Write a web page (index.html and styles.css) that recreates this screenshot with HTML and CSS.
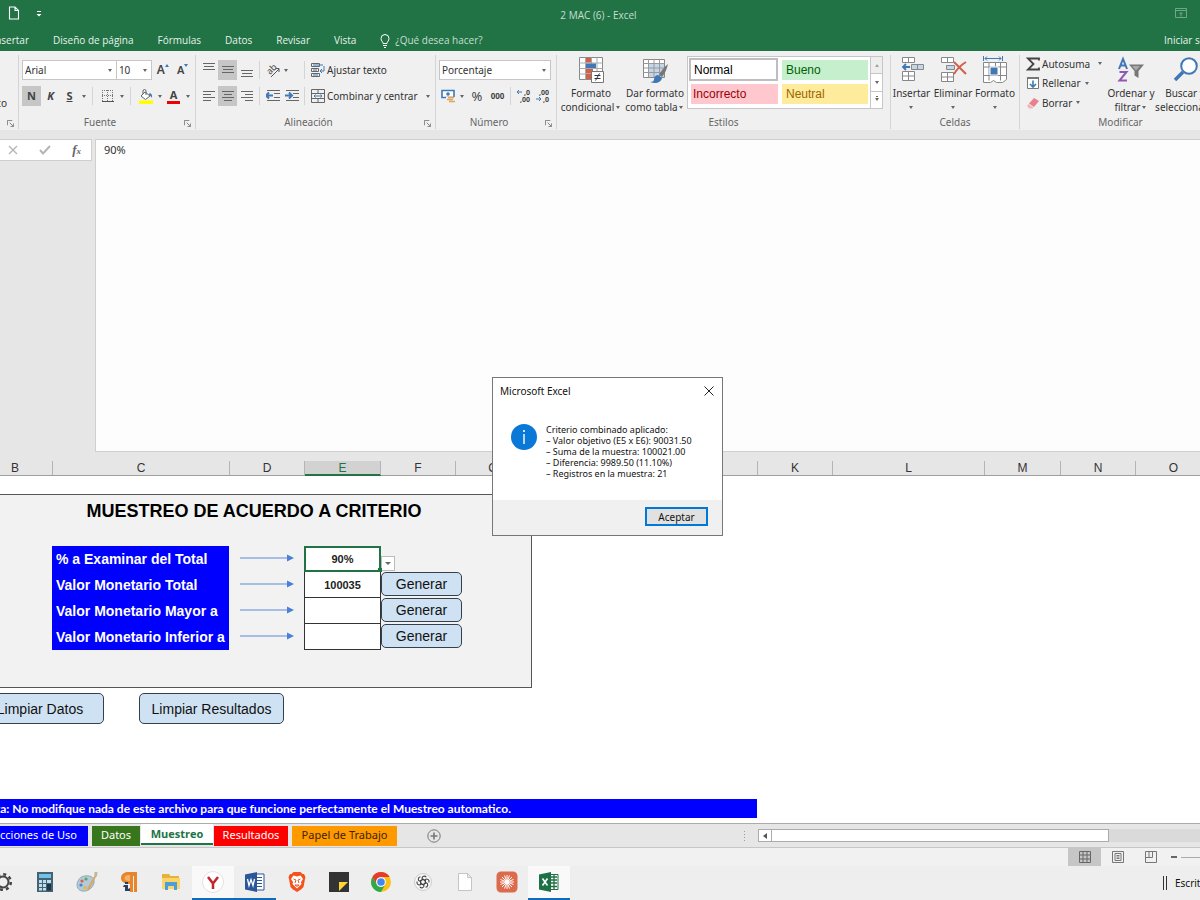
FILE: index.html
```
<!DOCTYPE html>
<html lang="es">
<head>
    <meta charset="UTF-8">
    <meta name="viewport" content="width=device-width, initial-scale=1.0">
    <title>2 MAC (6) - Excel</title>
    <link rel="stylesheet" href="styles.css">
</head>
<body>
    <!-- Title bar -->
    <header class="titlebar">
        <button class="quick" aria-label="Nuevo">
            <svg width="12" height="14" viewBox="0 0 12 14" fill="none" stroke="#fff" stroke-width="1.1"><path d="M1.5 1h5.5l3.5 3.5V13h-9zM7 1v3.5h3.5"/></svg>
        </button>
        <button class="quick" aria-label="Personalizar barra">
            <svg width="8" height="8" viewBox="0 0 8 8"><path d="M2 2h4v1H2zM1.5 5h5L4 7.5z" fill="#fff"/></svg>
        </button>
        <span class="doc-title">2 MAC (6) - Excel</span>
        <button class="quick ribbon-opts" aria-label="Opciones de cinta">
            <svg width="12" height="10" viewBox="0 0 12 10" fill="none" stroke="#6fa888"><path d="M.5.5h11v9H.5zM.5 2.5h11M6 8.5v-4M4.5 6L6 4.5 7.5 6"/></svg>
        </button>
    </header>

    <!-- Ribbon tabs -->
    <nav class="tabs">
        <a href="#" class="tab-cut"><span>Insertar</span></a>
        <a href="#">Diseño de página</a>
        <a href="#">Fórmulas</a>
        <a href="#">Datos</a>
        <a href="#">Revisar</a>
        <a href="#">Vista</a>
        <a href="#" class="tell-me">
            <svg width="10" height="14" viewBox="0 0 10 14" fill="none" stroke="#fff"><path d="M3 9.500C3 7.5 1 7 1 4.500a4 4 0 0 1 8 0C9 7 7 7.5 7 9.500zM3 11.5h4M4 13.5h2"/></svg>
            ¿Qué desea hacer?
        </a>
        <a href="#" class="login">Iniciar sesión</a>
    </nav>

    <!-- Ribbon -->
    <section class="ribbon">
        <div class="group">
            <div class="cut-text"><span>Copiar formato</span></div>
            <div class="group-name"><svg class="launch" viewBox="0 0 8 8"><path d="M.5 6V.5H6M3 3l4 4M7.5 4v3.500H4"/></svg></div>
        </div>

        <div class="group">
            <div class="rows font-rows">
                <div class="row">
                    <div class="combo font-name"><select aria-label="Fuente"><option>Arial</option></select></div>
                    <div class="combo font-size"><select aria-label="Tamaño"><option>10</option></select></div>
                    <button class="tool grow" aria-label="Aumentar fuente"><b class="big-a">A</b><i class="up"></i></button>
                    <button class="tool grow" aria-label="Disminuir fuente"><b>A</b><i class="down"></i></button>
                </div>
                <div class="row">
                    <button class="tool on"><b>N</b></button>
                    <button class="tool"><b><em>K</em></b></button>
                    <button class="tool"><b><u>S</u></b></button>
                    <i class="caret"></i>
                    <i class="sep"></i>
                    <button class="tool" aria-label="Bordes">
                        <svg width="14" height="14" viewBox="0 0 14 14" fill="none" stroke="#777"><path d="M1.5 1v11M6.5 1v11M11.5 1v11M1 1.5h11M1 6.5h11" stroke-dasharray="1 1"/><path d="M1 12.5h12" stroke="#555"/></svg>
                    </button>
                    <i class="caret"></i>
                    <i class="sep"></i>
                    <button class="tool" aria-label="Color de relleno">
                        <svg width="16" height="16" viewBox="0 0 16 16" fill="none"><path d="M1 12.5h14V16H1z" fill="#ff0"/><path d="M7 4l5 4-4.500 3.500L3 8z" fill="#fff" stroke="#666"/><path d="M5 6V3a1.500 1.500 0 0 1 3 0v4" stroke="#666"/><path d="M11.5 5c2 .5 3 2 2.500 5-1-1.500-1.500-2.500-3-3z" fill="#3f78b5"/></svg>
                    </button>
                    <i class="caret"></i>
                    <button class="tool font-color" aria-label="Color de fuente"><b>A</b></button>
                    <i class="caret"></i>
                </div>
            </div>
            <div class="group-name with-launch">Fuente<svg class="launch" viewBox="0 0 8 8"><path d="M.5 6V.5H6M3 3l4 4M7.5 4v3.500H4"/></svg></div>
        </div>

        <div class="group">
            <div class="rows">
                <div class="row">
                    <button class="tool" aria-label="Alinear arriba"><svg class="lines" viewBox="0 0 14 16"><path d="M1 1.5h12M2 4.500h10M1 7.5h12"/></svg></button>
                    <button class="tool on" aria-label="Alinear en medio"><svg class="lines" viewBox="0 0 14 16"><path d="M1 4.500h12M2 7.5h10M1 10.5h12"/></svg></button>
                    <button class="tool" aria-label="Alinear abajo"><svg class="lines" viewBox="0 0 14 16"><path d="M1 8.500h12M2 11.5h10M1 14.5h12"/></svg></button>
                    <i class="sep"></i>
                    <button class="tool" aria-label="Orientación">
                        <svg width="16" height="16" viewBox="0 0 16 16" fill="none" stroke="#555"><text transform="translate(5 13) rotate(-45)" class="ab">ab</text><path d="M6 15l8-8M10.5 6.5H14V10"/></svg>
                    </button>
                    <i class="caret"></i>
                    <i class="sep sep-wide"></i>
                    <button class="wide">
                        <svg width="14" height="14" viewBox="0 0 14 14" fill="none" stroke="#666"><path d="M.5.5h8v3h-8zM.5 5.5h7v3h-7zM.5 10.5h8v3h-8z"/><path d="M2 2h10M2 7h4M2 12h5" stroke="#3f78b5"/><path d="M13 3v5H9M11 6L9 8l2 2" stroke="#3f78b5"/></svg>
                        Ajustar texto
                    </button>
                </div>
                <div class="row">
                    <button class="tool" aria-label="Alinear a la izquierda"><svg class="lines" viewBox="0 0 14 16"><path d="M1 3.500h12M1 6.500h8M1 9.500h12M1 12.5h8"/></svg></button>
                    <button class="tool on" aria-label="Centrar"><svg class="lines" viewBox="0 0 14 16"><path d="M1 3.500h12M3 6.500h8M1 9.500h12M3 12.5h8"/></svg></button>
                    <button class="tool" aria-label="Alinear a la derecha"><svg class="lines" viewBox="0 0 14 16"><path d="M1 3.500h12M5 6.500h8M1 9.500h12M5 12.5h8"/></svg></button>
                    <i class="sep"></i>
                    <button class="tool" aria-label="Disminuir sangría"><svg class="lines" viewBox="0 0 14 16"><path d="M1 2.500h13M8 5.500h6M8 9.500h6M1 12.5h13"/><path d="M0 7.5h7M3 4.500l-3 3 3 3" class="blue"/></svg></button>
                    <button class="tool" aria-label="Aumentar sangría"><svg class="lines" viewBox="0 0 14 16"><path d="M1 2.500h13M8 5.500h6M8 9.500h6M1 12.5h13"/><path d="M0 7.5h7M4 4.500l3 3-3 3" class="blue"/></svg></button>
                    <i class="sep"></i>
                    <button class="wide">
                        <svg width="14" height="14" viewBox="0 0 14 14" fill="none" stroke="#666"><path d="M.5.5h13v13H.5zM.5 4.500h13M.5 9.500h13M7 .5v4M7 9.500v4"/><path d="M3 7h8M4.500 5.500L3 7l1.500 1.500M9.500 5.500L11 7 9.500 8.500" stroke="#3f78b5"/></svg>
                        Combinar y centrar
                    </button>
                    <i class="caret push"></i>
                </div>
            </div>
            <div class="group-name with-launch">Alineación<svg class="launch" viewBox="0 0 8 8"><path d="M.5 6V.5H6M3 3l4 4M7.5 4v3.500H4"/></svg></div>
        </div>

        <div class="group">
            <div class="rows">
                <div class="row">
                    <div class="combo number"><select aria-label="Formato de número"><option>Porcentaje</option></select></div>
                </div>
                <div class="row">
                    <button class="tool" aria-label="Contabilidad">
                        <svg width="15" height="15" viewBox="0 0 15 15" fill="none"><path d="M1 1.500h12v7H1z" fill="#fff" stroke="#3f78b5" stroke-width="1.600"/><circle cx="7" cy="5" r="1.800" fill="#3f78b5"/><path d="M5 8h9v6H5z" fill="#f0f0f0"/><path d="M7 8.500h6M6 10.5h6M8 12.5h6" stroke="#e0a458" stroke-width="1.500"/></svg>
                    </button>
                    <i class="caret"></i>
                    <button class="tool pct">%</button>
                    <button class="tool zeros">000</button>
                    <i class="sep"></i>
                    <button class="tool" aria-label="Aumentar decimales">
                        <svg width="14" height="14" viewBox="0 0 14 14" class="dec"><text x="7" y="6">,0</text><text x="3" y="13">,00</text><path d="M0 3h5M2 1L0 3l2 2"/></svg>
                    </button>
                    <button class="tool" aria-label="Disminuir decimales">
                        <svg width="14" height="14" viewBox="0 0 14 14" class="dec"><text x="3" y="6">,00</text><text x="7" y="13">,0</text><path d="M0 10h5M3 8l2 2-2 2"/></svg>
                    </button>
                </div>
            </div>
            <div class="group-name with-launch">Número<svg class="launch" viewBox="0 0 8 8"><path d="M.5 6V.5H6M3 3l4 4M7.5 4v3.500H4"/></svg></div>
        </div>

        <div class="group">
            <div class="bigs styles">
                <button class="big">
                    <svg width="28" height="28" viewBox="0 0 28 28" fill="none"><path d="M2.500 1.500h23v22h-23z" fill="#fff" stroke="#888"/><path d="M2.500 7h23M2.500 12.5h23M2.500 18h23M8.500 1.500v22M14.5 1.500v22M20 1.500v22" stroke="#aaa"/><path d="M9 2h5v4.500H9zM9 13h7v4.500H9zM9 18h5v5H9z" fill="#d0604a"/><path d="M9 7.500h10V12H9z" fill="#3f78b5"/><path d="M14.5 15.500h12v11h-12z" fill="#fff" stroke="#777"/><path d="M17.500 19.500h6M17.500 22.500h6M22.500 17.500l-4 7" stroke="#333"/></svg>
                    <span>Formato<br>condicional<i class="caret"></i></span>
                </button>
                <button class="big">
                    <svg width="28" height="28" viewBox="0 0 28 28" fill="none"><path d="M2.500 3.500h21v18h-21z" fill="#fff" stroke="#888"/><path d="M8 8h15v13H8z" fill="#c5d6e8"/><path d="M2.500 7.500h21M2.500 12h21M2.500 16.500h21M7.500 3.500v18M13 3.500v18M18.500 3.500v18" stroke="#999"/><path d="M27 8c-4 3-7 7-9 11l3 2c3-4 5-8 6-13z" fill="#777"/><path d="M17 19c-3 0-4 3-4 5-1 2-3 2-4 2 5 2 11 1 12-4z" fill="#3f78b5"/></svg>
                    <span>Dar formato<br>como tabla<i class="caret"></i></span>
                </button>
                <div class="gallery">
                    <div class="swatches">
                        <button class="sw normal">Normal</button>
                        <button class="sw good">Bueno</button>
                        <button class="sw bad">Incorrecto</button>
                        <button class="sw neutral">Neutral</button>
                    </div>
                    <div class="gallery-scroll">
                        <button class="off" aria-label="Arriba"><i class="caret flip"></i></button>
                        <button aria-label="Abajo"><i class="caret"></i></button>
                        <button class="more" aria-label="Más"><i class="caret"></i></button>
                    </div>
                </div>
            </div>
            <div class="group-name">Estilos</div>
        </div>

        <div class="group">
            <div class="bigs cells">
                <button class="big">
                    <svg width="28" height="28" viewBox="0 0 28 28" fill="none" stroke="#888"><path d="M4.500 1.500h12v5h-12zM10.5 1.500v5M4.500 15.500h12v9h-12zM10.5 15.500v9M4.500 20h12" fill="#fff"/><path d="M13.500 8.500h12v5h-12zM19.500 8.500v5" fill="#c5d6e8"/><path d="M5 11h7M8 8l-3 3 3 3" stroke="#3f78b5" stroke-width="1.800"/></svg>
                    <span>Insertar<i class="caret under"></i></span>
                </button>
                <button class="big">
                    <svg width="28" height="28" viewBox="0 0 28 28" fill="none" stroke="#888"><path d="M2.500 1.500h12v5h-12zM8.500 1.500v5M2.500 16.500h12v9h-12zM8.500 16.500v9M2.500 21h12" fill="#fff"/><path d="M7.500 9.500h8v4h-8z" fill="#c5d6e8"/><path d="M15 6l12 12M27 6c-5 3-9 7-12 12" stroke="#d0604a" stroke-width="2"/></svg>
                    <span>Eliminar<i class="caret under"></i></span>
                </button>
                <button class="big">
                    <svg width="28" height="28" viewBox="0 0 28 28" fill="none" stroke="#888"><path d="M2.500 6.500h23v17l-4 3h-6l-3-2-3 2h-7z" fill="#fff"/><path d="M2.500 11h23M2.500 19.500h23M8 6.500v18M14.5 6.500v4M19.500 6.500v18"/><path d="M9 11h8v8H9z" fill="#3f78b5" stroke="#fff"/><path d="M2.500 0v5M21.500 0v5M4 2.500h16M6 .5l-2 2 2 2M18 .5l2 2-2 2" stroke="#3f78b5"/></svg>
                    <span>Formato<i class="caret under"></i></span>
                </button>
            </div>
            <div class="group-name">Celdas</div>
        </div>

        <div class="group edit">
            <div class="bigs">
                <div class="stack">
                    <button class="wide"><svg width="14" height="14" viewBox="0 0 14 14" fill="none"><path d="M13 3.500V1.500H2L7.500 7 2 12.5h11v-2" stroke="#444" stroke-width="1.800"/></svg>Autosuma<i class="caret push"></i></button>
                    <button class="wide"><svg width="14" height="14" viewBox="0 0 14 14" fill="none"><path d="M1.500 1.500h11v11h-11z" fill="#fff" stroke="#777"/><path d="M1 2h12" stroke="#777" stroke-width="2"/><path d="M7 4.500v6M4 8l3 3 3-3" stroke="#3f78b5" stroke-width="1.600"/></svg>Rellenar<i class="caret"></i></button>
                    <button class="wide"><svg width="14" height="14" viewBox="0 0 14 14"><path d="M8 2l5 3-5 6-5-3.500z" fill="#e8808e"/><path d="M2.500 8l5 3.500-1 1H3L1 10z" fill="#f3b4bd"/></svg>Borrar<i class="caret"></i></button>
                </div>
                <button class="big">
                    <svg width="28" height="28" viewBox="0 0 28 28" fill="none"><path d="M2 13L6 3l4 10M3.500 9.500h5" stroke="#3f78b5" stroke-width="2"/><path d="M2.500 16h7l-7 8.500h7.500" stroke="#9057b5" stroke-width="2"/><path d="M12 8.500h15l-5.500 6.500v7l-4-2.500V15z" fill="#777"/><path d="M15 10h8l-4 4.500z" fill="#aaa"/></svg>
                    <span>Ordenar y<br>filtrar<i class="caret"></i></span>
                </button>
                <button class="big">
                    <svg width="28" height="28" viewBox="0 0 28 28" fill="none"><circle cx="18" cy="10" r="7.800" fill="#fff" stroke="#3f78b5" stroke-width="2"/><path d="M12 16l-8 8" stroke="#3f78b5" stroke-width="3.500"/></svg>
                    <span>Buscar y<br>seleccionar<i class="caret"></i></span>
                </button>
            </div>
            <div class="group-name">Modificar</div>
        </div>
    </section>

    <!-- Formula bar -->
    <section class="formula">
        <div class="formula-buttons">
            <button aria-label="Cancelar"><svg width="10" height="10" viewBox="0 0 10 10" stroke="#b5b5b5" stroke-width="1.300"><path d="M1 1l8 8M9 1L1 9"/></svg></button>
            <button aria-label="Introducir"><svg width="12" height="10" viewBox="0 0 12 10" fill="none" stroke="#b5b5b5" stroke-width="2"><path d="M1 5l3 3.500L11 1"/></svg></button>
            <button class="fx">f<small>x</small></button>
        </div>
        <textarea class="formula-text" aria-label="Barra de fórmulas">90%</textarea>
    </section>

    <!-- Column headers -->
    <div class="col-heads">
        <span>B</span><span>C</span><span>D</span><span class="current">E</span><span>F</span><span>G</span><span>H</span><span>I</span><span>J</span><span>K</span><span>L</span><span>M</span><span>N</span><span>O</span>
    </div>

    <!-- Sheet -->
    <main class="sheet">
        <section class="panel">
            <h1>MUESTREO DE ACUERDO A CRITERIO</h1>
            <div class="criteria">
                <label for="pct">% a Examinar del Total</label>
                <svg class="arrow" viewBox="0 0 56 8"><path d="M1 4h48"/><path d="M48 .5L55 4l-7 3.500z" class="tip"/></svg>
                <div class="cell active"><input id="pct" value="90%"><i class="handle"></i></div>
                <button class="drop" aria-label="Elegir valor"><i class="caret"></i></button>

                <label for="total">Valor Monetario Total</label>
                <svg class="arrow" viewBox="0 0 56 8"><path d="M1 4h48"/><path d="M48 .5L55 4l-7 3.500z" class="tip"/></svg>
                <div class="cell"><input id="total" value="100035"></div>
                <button class="shape">Generar</button>

                <label for="mayor">Valor Monetario Mayor a</label>
                <svg class="arrow" viewBox="0 0 56 8"><path d="M1 4h48"/><path d="M48 .5L55 4l-7 3.500z" class="tip"/></svg>
                <div class="cell"><input id="mayor"></div>
                <button class="shape">Generar</button>

                <label for="inferior">Valor Monetario Inferior a</label>
                <svg class="arrow" viewBox="0 0 56 8"><path d="M1 4h48"/><path d="M48 .5L55 4l-7 3.500z" class="tip"/></svg>
                <div class="cell"><input id="inferior"></div>
                <button class="shape">Generar</button>
            </div>
        </section>
        <div class="actions">
            <button class="shape clear-data">Limpiar Datos</button>
            <button class="shape clear-results">Limpiar Resultados</button>
        </div>
        <p class="note"><span>Nota: No modifique nada de este archivo para que funcione perfectamente el Muestreo automatico.</span></p>
    </main>

    <!-- Sheet tabs and horizontal scroll -->
    <footer class="sheet-tabs">
        <a href="#" class="st use"><span>Instrucciones de Uso</span></a>
        <a href="#" class="st data">Datos</a>
        <a href="#" class="st current">Muestreo</a>
        <a href="#" class="st results">Resultados</a>
        <a href="#" class="st paper">Papel de Trabajo</a>
        <button class="add" aria-label="Hoja nueva"><svg width="14" height="14" viewBox="0 0 14 14" fill="none" stroke="#777"><circle cx="7" cy="7" r="6.200"/><path d="M7 3.500v7M3.500 7h7" stroke-width="1.600"/></svg></button>
        <svg class="dots" width="2" height="10" viewBox="0 0 2 10" fill="#999"><path d="M0 0h1v1H0zM0 3h1v1H0zM0 6h1v1H0zM0 9h1v1H0z"/></svg>
        <div class="hscroll">
            <button aria-label="Desplazar a la izquierda"><svg width="4" height="6" viewBox="0 0 4 6"><path d="M4 0v6L0 3z" fill="#555"/></svg></button>
            <div class="thumb"></div>
        </div>
    </footer>

    <div class="status">
        <button class="view on" aria-label="Normal"><svg width="12" height="12" viewBox="0 0 12 12" fill="none" stroke="#666"><path d="M.5.5h11v11H.5zM.5 4h11M.5 8h11M4 .5v11M8 .5v11"/></svg></button>
        <button class="view" aria-label="Diseño de página"><svg width="12" height="12" viewBox="0 0 12 12" fill="none" stroke="#777"><path d="M.5.5h11v11H.5zM3 2.500h6v7H3zM4.500 4.500h3M4.500 6h3M4.500 7.500h3"/></svg></button>
        <button class="view" aria-label="Salto de página"><svg width="12" height="12" viewBox="0 0 12 12" fill="none" stroke="#777"><path d="M.5.5h11v11H.5zM.5 6.500h7v-6M4 .5v6"/></svg></button>
        <i class="minus"></i>
        <i class="zoom-line"></i>
    </div>

    <!-- Taskbar -->
    <nav class="taskbar">
        <button class="app" aria-label="Configuración"><svg width="20" height="20" viewBox="0 0 20 20" fill="none" stroke="#444"><circle cx="10" cy="10" r="5.500" stroke-width="2"/><circle cx="10" cy="10" r="7.800" stroke-width="2.500" stroke-dasharray="3.060 3.060"/></svg></button>
        <button class="app" aria-label="Calculadora"><svg width="20" height="20" viewBox="0 0 20 20"><path d="M2 0h16v20H2z" fill="#47616f"/><path d="M4 2h12v4H4z" fill="#6fc3ea"/><path d="M4 8h3v3H4zM8 8h3v3H8zM12 8h4v3h-4zM4 12h3v3H4zM8 12h3v3H8zM4 16h3v2.500H4zM8 16h3v2.500H8z" fill="#b9dff0"/><path d="M12 12h4v6.500h-4z" fill="#17374a"/></svg></button>
        <button class="app" aria-label="Paint"><svg width="22" height="20" viewBox="0 0 22 20"><path d="M9 4c6-1 10 2 9 7s-7 9-12 8-6-6-4-10 4-4.500 7-5z" fill="#b4cad8" stroke="#8fa9b8"/><circle cx="6" cy="9" r="1.600" fill="#d9604c"/><circle cx="10" cy="7" r="1.600" fill="#58a85a"/><circle cx="5" cy="13" r="1.600" fill="#4a86c5"/><circle cx="9" cy="15.500" r="1.600" fill="#e5b93f"/><path d="M20 1l1.500 1L13 18l-2 1 .5-3z" fill="#d9a566"/><path d="M18.500 0h3l-1 5-2-1z" fill="#c4b49a"/></svg></button>
        <button class="app" aria-label="Editor"><svg width="18" height="20" viewBox="0 0 18 20"><path d="M17 0v20h-3V4h-1v16h-3v-8C4 12 1 9.500 1 6s3-6 7-6z" fill="#e8852c"/><path d="M10 3v6C6 9 4.500 8 4.500 6S6 3 10 3z" fill="#f6b06c"/><path d="M5 10h3v2H5zM4 13h4v4l2-1v3H5v-4H3z" fill="#24405e"/></svg></button>
        <button class="app" aria-label="Explorador"><svg width="20" height="18" viewBox="0 0 20 18"><path d="M1 1h7l1.500 2H18v4H1z" fill="#e5b23c"/><path d="M1 5h18v11H1z" fill="#fbd667"/><path d="M4 9h12v8h-3v-4H7v4H4z" fill="#4a9edb"/></svg></button>
        <button class="app open here" aria-label="Yandex"><svg width="22" height="22" viewBox="0 0 22 22"><circle cx="11" cy="11" r="10.500" fill="#fff" stroke="#e2e2e2"/><path d="M6 6l5 6.500V18M16 6l-5 6.500" fill="none" stroke="#c4242e" stroke-width="2.500"/></svg></button>
        <button class="app open" aria-label="Word"><svg width="20" height="20" viewBox="0 0 20 20"><path d="M9 2h10v16H9z" fill="#fff" stroke="#2b579a"/><path d="M12 5.500h5M12 8.500h5M12 11.5h5M12 14.5h5" stroke="#2b579a"/><path d="M0 2.500L12 0v20L0 17.500z" fill="#2b579a"/><path d="M2.500 7l1.500 6.500L6 7.500l2 6L9.500 7" fill="none" stroke="#fff" stroke-width="1.300"/></svg></button>
        <button class="app" aria-label="Brave"><svg width="18" height="20" viewBox="0 0 18 20"><path d="M5.500 0h7l2 2H16l1.500 3-.5 2-1.500 8-2.500 2.500L9 20l-4-2.500L2.500 15 1 7 .5 5 2 2h1.500z" fill="#f4511e"/><path d="M9 4.500l3.500-1L15 7l-2 3 .5 2L9 16.500 4.500 12 5 10 3 7l2.500-3.500z" fill="#fff"/><path d="M5.500 7l2.500 1-1 3M12.500 7L10 8l1 3M7 13h4l-2 1.500z" stroke="#f4511e" fill="none"/></svg></button>
        <button class="app" aria-label="Notas"><svg width="20" height="20" viewBox="0 0 20 20"><path d="M0 0h20v20H0z" fill="#333"/><path d="M10 10h9l-9 9z" fill="#fdd835"/></svg></button>
        <button class="app" aria-label="Chrome"><svg width="20" height="20" viewBox="0 0 20 20"><circle cx="10" cy="10" r="10" fill="#fbc116"/><path d="M1.340 5A10 10 0 0 1 18.660 5H10a5 5 0 0 0-4.330 7.500z" fill="#e33b2e"/><path d="M1.340 5A10 10 0 0 0 10 20l4.330-7.500A5 5 0 0 1 5.670 12.5z" fill="#2da94f"/><circle cx="10" cy="10" r="4.800" fill="#fff"/><circle cx="10" cy="10" r="3.800" fill="#4286f5"/></svg></button>
        <button class="app" aria-label="ChatGPT"><svg width="18" height="18" viewBox="0 0 18 18" fill="none"><circle cx="9" cy="9" r="8.500" fill="#f7f7f7" stroke="#ccc"/><g stroke="#444" stroke-width="1.100"><path id="petal" d="M9 6.300L6.600 7.700v3.800a2.300 2.300 0 0 1-3.400-2.900"/><use href="#petal" transform="rotate(60 9 9)"/><use href="#petal" transform="rotate(120 9 9)"/><use href="#petal" transform="rotate(180 9 9)"/><use href="#petal" transform="rotate(240 9 9)"/><use href="#petal" transform="rotate(300 9 9)"/></g></svg></button>
        <button class="app" aria-label="Documento"><svg width="14" height="18" viewBox="0 0 14 18" fill="#fff" stroke="#c4c4c4"><path d="M.5.5h9l4 4v13H.5zM9.500.5v4h4"/></svg></button>
        <button class="app" aria-label="Claude"><svg width="22" height="22" viewBox="0 0 22 22"><path d="M5 .5h12a4.500 4.500 0 0 1 4.500 4.500v12a4.500 4.500 0 0 1-4.500 4.500H5A4.500 4.500 0 0 1 .5 17V5A4.500 4.500 0 0 1 5 .5z" fill="#dc6b4c"/><path d="M11 4v14M4 11h14M6 6l10 10M16 6L6 16M8.500 4.500l5 13M13.500 4.500l-5 13M4.500 8.500l13 5M17.500 8.500l-13 5" stroke="#fff"/></svg></button>
        <button class="app open here" aria-label="Excel"><svg width="20" height="20" viewBox="0 0 20 20"><path d="M10 2.500h9v15h-9z" fill="#fff" stroke="#1e7145"/><path d="M12 5h6M12 8h6M12 11h6M12 14.5h6M15 3v14" stroke="#1e7145" stroke-width="1.300"/><path d="M0 2.500L12 0v20L0 17.500z" fill="#1e7145"/><path d="M3.500 6.500l5 7M8.500 6.500l-5 7" stroke="#fff" stroke-width="1.600"/></svg></button>
        <div class="desk"><i class="bars"></i><span>Escritorio</span></div>
    </nav>

    <!-- Message box -->
    <div class="msgbox" role="dialog" aria-labelledby="msgTitle">
        <div class="msg-head">
            <span id="msgTitle">Microsoft Excel</span>
            <button aria-label="Cerrar"><svg width="10" height="10" viewBox="0 0 10 10" stroke="#222"><path d="M.5.5l9 9M9.500.5l-9 9"/></svg></button>
        </div>
        <div class="msg-body">
            <svg width="26" height="26" viewBox="0 0 26 26"><circle cx="13" cy="13" r="13" fill="#0a78d6"/><path d="M12.300 10h1.400v10h-1.400zM12.200 6h1.600v2h-1.600z" fill="#fff"/></svg>
            <p>Criterio combinado aplicado:<br>– Valor objetivo (E5 x E6): 90031.50<br>– Suma de la muestra: 100021.00<br>– Diferencia: 9989.50 (11.10%)<br>– Registros en la muestra: 21</p>
        </div>
        <div class="msg-foot"><button>Aceptar</button></div>
    </div>
</body>
</html>
```
FILE: styles.css
```
* {
    box-sizing: border-box;
}

body {
    margin: 0;
    min-height: 100vh;
    display: flex;
    flex-direction: column;
    position: relative;
    overflow: hidden;
    font-family: "Noto Sans", "Open Sans", sans-serif;
    font-size: 10px;
    line-height: 14px;
    color: #333;
    background: #e6e6e6;
}

button {
    font: inherit;
    color: inherit;
    background: none;
    border: none;
    padding: 0;
    margin: 0;
}

a {
    color: inherit;
    text-decoration: none;
}

svg {
    display: block;
    flex: none;
}

/* Title bar and tabs */
.titlebar {
    display: flex;
    align-items: center;
    height: 30px;
    padding: 0 13px 4px 8px;
    background: #217346;
    color: #c5dfcf;
    font-family: "Open Sans", sans-serif;
}

.quick {
    margin-right: 15px;
}

.doc-title {
    flex: 1;
    text-align: center;
    padding: 4px 36px 0 0;
}

.ribbon-opts {
    margin: 0;
}

.tabs {
    display: flex;
    height: 21px;
    line-height: 21px;
    background: #217346;
    color: #e6f2ea;
    font-family: "Open Sans", sans-serif;
    white-space: nowrap;
}

.tabs a {
    margin-right: 24px;
}

.tabs .tab-cut {
    display: flex;
    justify-content: flex-end;
    width: 29px;
    overflow: hidden;
}

.tabs .tell-me {
    display: flex;
    align-items: center;
    gap: 5px;
    color: #c5dfcf;
}

.tabs .login {
    width: 36px;
    margin: 0 0 0 auto;
    overflow: hidden;
}

/* Ribbon */
.ribbon {
    display: grid;
    grid-template-columns: 19px 177px 240px 121px 334px 129px minmax(0, 1fr);
    height: 79px;
    padding-top: 4px;
    background: #f0f0f0;
    overflow: hidden;
}

.group {
    display: flex;
    flex-direction: column;
    justify-content: space-between;
    height: 74px;
    min-width: 0;
    border-right: 1px solid #d4d4d4;
}

.group.edit {
    width: 201px;
    border: none;
}

.group-name {
    position: relative;
    height: 14px;
    text-align: center;
    color: #666;
}

.with-launch {
    padding-right: 14px;
}

.launch {
    position: absolute;
    right: 4px;
    bottom: 2px;
    width: 7px;
    height: 7px;
    fill: none;
    stroke: #777;
}

.cut-text {
    display: flex;
    justify-content: flex-end;
    padding: 41px 11px 0 0;
    white-space: nowrap;
}

.rows {
    display: flex;
    flex-direction: column;
    gap: 6px;
    padding: 5px 3px 0;
}

.row {
    display: flex;
    align-items: center;
    height: 20px;
}

.tool {
    display: flex;
    align-items: center;
    justify-content: center;
    width: 19px;
    height: 20px;
    color: #444;
    font-size: 11px;
}

.tool.on {
    background: #c6c6c6;
}

.caret {
    display: flex;
    justify-content: center;
    flex: none;
    width: 8px;
}

.caret::before {
    content: "";
    border: 2px solid transparent;
    border-top: 3px solid #666;
    border-bottom: 0;
}

.push {
    margin-left: auto;
}

.sep {
    flex: none;
    width: 1px;
    height: 18px;
    margin: 0 3px;
    background: #d4d4d4;
}

.font-rows .sep {
    margin: 0 5px 0 4px;
}

.font-rows .caret {
    width: 9px;
}

.sep-wide {
    margin-left: 14px;
}

.combo {
    position: relative;
    height: 20px;
    background: #fff;
    border: 1px solid #c6c6c6;
}

.combo select {
    width: 100%;
    height: 18px;
    padding: 0 2px;
    border: none;
    background: none;
    appearance: none;
    font: inherit;
    color: inherit;
}

.combo::after {
    content: "";
    position: absolute;
    right: 4px;
    top: 8px;
    border: 2px solid transparent;
    border-top: 3px solid #666;
    border-bottom: 0;
}

.font-name {
    width: 96px;
}

.font-size {
    width: 37px;
    margin-left: -1px;
}

.number {
    width: 112px;
}

.grow .big-a {
    font-size: 12px;
}

.grow b {
    font-weight: 600;
}

.grow {
    margin-left: 1px;
}

.grow i {
    align-self: flex-start;
    margin-top: 4px;
    border: 2px solid transparent;
}

.grow .up {
    margin-top: 2px;
    border-bottom: 3px solid #3f78b5;
}

.grow .down {
    border-top: 3px solid #3f78b5;
}

.font-color {
    line-height: 13px;
}

.font-color b {
    width: 13px;
    border-bottom: 3px solid #e00;
}

.lines {
    width: 14px;
    height: 16px;
    fill: none;
    stroke: #666;
}

.lines .blue {
    stroke: #3f78b5;
    stroke-width: 2px;
}

.ab {
    font-size: 9px;
    stroke: none;
    fill: #444;
}

.wide {
    display: flex;
    align-items: center;
    gap: 2px;
    margin-left: 3px;
    white-space: nowrap;
}

.pct {
    width: 22px;
    font-size: 13px;
}

.zeros {
    font-size: 8px;
    font-weight: bold;
}

.dec {
    fill: #444;
    font-size: 7px;
    font-weight: bold;
}

.dec path {
    fill: none;
    stroke: #3f78b5;
}

.bigs {
    display: flex;
    height: 59px;
}

.styles {
    padding-left: 2px;
}

.big {
    display: flex;
    flex-direction: column;
    align-items: center;
    flex: none;
    gap: 2px;
    width: 64px;
    padding-top: 1px;
    white-space: nowrap;
}

.big .caret {
    display: inline-flex;
    height: 5px;
    width: 7px;
}

.big .under {
    display: flex;
    width: auto;
    height: 14px;
    align-items: center;
}

.gallery {
    display: flex;
    width: 196px;
    height: 53px;
    margin-top: 1px;
    background: #fff;
    border: 1px solid #c6c6c6;
}

.swatches {
    flex: 1;
    display: grid;
    grid-template-columns: 89px 86px;
    grid-template-rows: 23px 20px;
    gap: 3px 4px;
    padding: 1px;
    align-items: center;
}

.sw {
    height: 20px;
    padding: 0 4px;
    text-align: left;
    font: 12px/18px "Liberation Sans", sans-serif;
}

.normal {
    height: 23px;
    padding: 0 3px;
    border: 2px solid #c0bcc0;
    color: #000;
}

.good {
    background: #c6efce;
    color: #006100;
}

.bad {
    margin-left: 2px;
    padding: 0 2px;
    background: #ffc7ce;
    color: #9c0006;
}

.neutral {
    background: #ffeb9c;
    color: #9c6500;
}

.gallery-scroll {
    display: flex;
    flex-direction: column;
    width: 12px;
    border-left: 1px solid #c6c6c6;
}

.gallery-scroll button {
    flex: 1;
    display: flex;
    align-items: center;
    justify-content: center;
}

.gallery-scroll button + button {
    border-top: 1px solid #c6c6c6;
}

.gallery-scroll .off {
    background: #e4e4e4;
    opacity: 0.6;
}

.flip {
    transform: rotate(180deg);
}

.more .caret::before {
    box-shadow: 0 -3px 0 -1px #666;
}

.cells .big {
    width: 41px;
}

.cells .big + .big {
    width: 42px;
}

.stack {
    display: flex;
    flex-direction: column;
    justify-content: space-between;
    width: 84px;
    height: 56px;
    padding-left: 3px;
}

.stack .wide {
    height: 17px;
}

.edit .big {
    width: 54px;
}

/* Formula bar */
.formula {
    display: flex;
    align-items: flex-start;
    gap: 3px;
    height: 322px;
    padding: 9px 0 0;
}

.formula-buttons {
    display: flex;
    align-items: center;
    justify-content: space-between;
    width: 92px;
    height: 22px;
    padding: 0 10px 0 8px;
    background: #fff;
    border: 1px solid #cfcfcf;
    border-left: none;
}

.fx {
    font: italic bold 13px/16px "Liberation Serif", serif;
    color: #666;
}

.fx small {
    font-size: 9px;
}

.formula-text {
    flex: 1;
    height: 313px;
    padding: 3px 8px;
    border: 1px solid #cfcfcf;
    border-right: none;
    background: #fdfdfd;
    font: 11px/14px "Noto Sans", sans-serif;
    color: #333;
    resize: none;
    outline: none;
}

/* Column headers */
.col-heads {
    display: grid;
    grid-template-columns: 75px 177px 75px 76px 75px 75px 76px 75px 76px 75px 152px 76px 75px 76px;
    height: 24px;
    margin-left: -22px;
    padding-top: 9px;
    border-bottom: 1px solid #9f9f9f;
    font: 12px/14px "Liberation Sans", sans-serif;
    text-align: center;
}

.col-heads span {
    border-right: 1px solid #b5b5b5;
}

.col-heads .current {
    background: #d2d2d2;
    color: #217346;
    box-shadow: 0 1px #217346, inset 0 -1px #217346;
}

/* Sheet */
.sheet {
    flex: 1;
    display: flex;
    flex-direction: column;
    align-items: flex-start;
    padding-top: 18px;
    background: #fff;
    font-family: "Liberation Sans", sans-serif;
    color: #111;
}

.panel {
    width: 532px;
    height: 194px;
    border: solid #555;
    border-width: 1px 1px 1px 0;
    background: #f2f2f2;
}

.panel h1 {
    width: 508px;
    margin: 6px 0 25px;
    font-size: 18px;
    line-height: 20px;
    text-align: center;
    color: #000;
}

.criteria {
    display: grid;
    grid-template-columns: 177px 75px 77px 81px;
    grid-auto-rows: 26px;
    margin-left: 52px;
}

.criteria label {
    padding: 0 4px;
    font-size: 14px;
    font-weight: bold;
    line-height: 27px;
    white-space: nowrap;
    background: #0000fe;
    color: #fff;
}

.arrow {
    width: 56px;
    height: 8px;
    margin: 8px 0 0 10px;
    fill: none;
    stroke: #5b8bd5;
}

.arrow .tip {
    fill: #4a80d6;
    stroke: none;
}

.cell {
    position: relative;
    background: #fff;
    border: solid #333;
    border-width: 0 1px 1px;
}

.cell.active {
    border: 2px solid #217346;
}

.cell input {
    width: 100%;
    height: 100%;
    padding: 0;
    border: none;
    background: none;
    font: bold 11px "Liberation Sans", sans-serif;
    text-align: center;
    color: #222;
    outline: none;
}

.handle {
    position: absolute;
    right: -3px;
    bottom: -2px;
    width: 4px;
    height: 4px;
    background: #217346;
}

.drop {
    display: flex;
    align-items: center;
    justify-content: center;
    width: 14px;
    height: 15px;
    margin-top: 10px;
    background: #fff;
    border: 1px solid #bbb;
}

.drop .caret::before {
    border-width: 3px 3px 0;
}

.shape {
    background: #cfe2f3;
    border: 1px solid #34404c;
    border-radius: 5px;
    font: 14px/20px "Liberation Sans", sans-serif;
    white-space: nowrap;
}

.criteria .shape {
    height: 24px;
}

.actions {
    display: flex;
    gap: 35px;
    margin: 5px 0 0 -24px;
}

.actions .shape {
    height: 31px;
}

.clear-data {
    width: 128px;
}

.clear-results {
    width: 145px;
}

.note {
    display: flex;
    width: 757px;
    margin: auto 0 5px;
    overflow: hidden;
    background: #0000fe;
    color: #fff;
    font: bold 12px/19px Lato, "Open Sans", sans-serif;
    white-space: nowrap;
}

.note span {
    display: flex;
    justify-content: flex-end;
    width: 511px;
}

/* Sheet tabs */
.sheet-tabs {
    display: flex;
    align-items: center;
    height: 25px;
    border-top: 1px solid #ababab;
    border-bottom: 1px solid #c6c6c6;
    background: #e6e6e6;
    font-size: 11px;
    line-height: 18px;
    white-space: nowrap;
}

.st {
    flex: none;
    height: 20px;
    margin-right: 4px;
    text-align: center;
    color: #fff;
}

.use {
    display: flex;
    justify-content: flex-end;
    width: 88px;
    padding-right: 11px;
    background: #0000fe;
}

.data {
    width: 48px;
    margin-right: 1px;
    background: #38761d;
}

.st.current {
    align-self: flex-start;
    width: 72px;
    height: 21px;
    margin-right: 1px;
    background: #fff;
    border-bottom: 2px solid #217346;
    color: #217346;
    font-weight: bold;
    font-family: "Open Sans", sans-serif;
    line-height: 20px;
}

.results {
    width: 74px;
    background: #f00;
}

.paper {
    width: 105px;
    background: #ff9900;
    color: #3a2400;
}

.add {
    margin-left: 26px;
}

.dots {
    margin-left: auto;
}

.hscroll {
    display: flex;
    width: 442px;
    height: 13px;
    margin-left: 12px;
    background: #dadada;
}

.hscroll button {
    display: flex;
    align-items: center;
    justify-content: center;
    width: 14px;
    background: #fff;
    border: 1px solid #ababab;
}

.thumb {
    width: 337px;
    background: #fff;
    border: 1px solid #ababab;
    border-left: none;
}

/* Status bar */
.status {
    display: flex;
    align-items: center;
    justify-content: flex-end;
    height: 18px;
    background: #f1f1f1;
}

.view {
    display: flex;
    align-items: center;
    justify-content: center;
    width: 33px;
    height: 18px;
}

.view.on {
    background: #c6c6c6;
}

.minus {
    width: 6px;
    height: 2px;
    margin: 0 4px;
    background: #666;
}

.zoom-line {
    width: 19px;
    height: 1px;
    background: #aaa;
}

/* Taskbar */
.taskbar {
    display: flex;
    height: 34px;
    margin-left: -18px;
    background: #eee;
}

.app {
    display: flex;
    align-items: center;
    justify-content: center;
    flex: none;
    width: 42px;
    border-bottom: 2px solid transparent;
}

.app.open {
    border-bottom-color: #0f6cbd;
}

.app.here {
    background: #f9f9f9;
}

.desk {
    display: flex;
    align-items: center;
    gap: 8px;
    width: 37px;
    margin-left: auto;
    overflow: hidden;
    color: #111;
}

.bars {
    flex: none;
    width: 4px;
    height: 14px;
    border: solid #333;
    border-width: 0 1px;
}

/* Message box */
.msgbox {
    position: absolute;
    left: 492px;
    top: 377px;
    width: 231px;
    background: #fff;
    border: 1px solid #777;
    color: #111;
}

.msg-head {
    display: flex;
    align-items: center;
    justify-content: space-between;
    height: 25px;
    padding: 0 8px 0 7px;
}

.msg-body {
    display: flex;
    gap: 9px;
    height: 97px;
    padding: 21px 18px 0;
    font-size: 9px;
    line-height: 11px;
    white-space: nowrap;
}

.msg-body p {
    margin: 0;
}

.msg-foot {
    display: flex;
    justify-content: flex-end;
    padding: 7px 14px 9px;
    background: #f0f0f0;
}

.msg-foot button {
    width: 63px;
    height: 19px;
    border: 2px solid #0078d7;
    background: #e1e1e1;
    line-height: 14px;
}
```
